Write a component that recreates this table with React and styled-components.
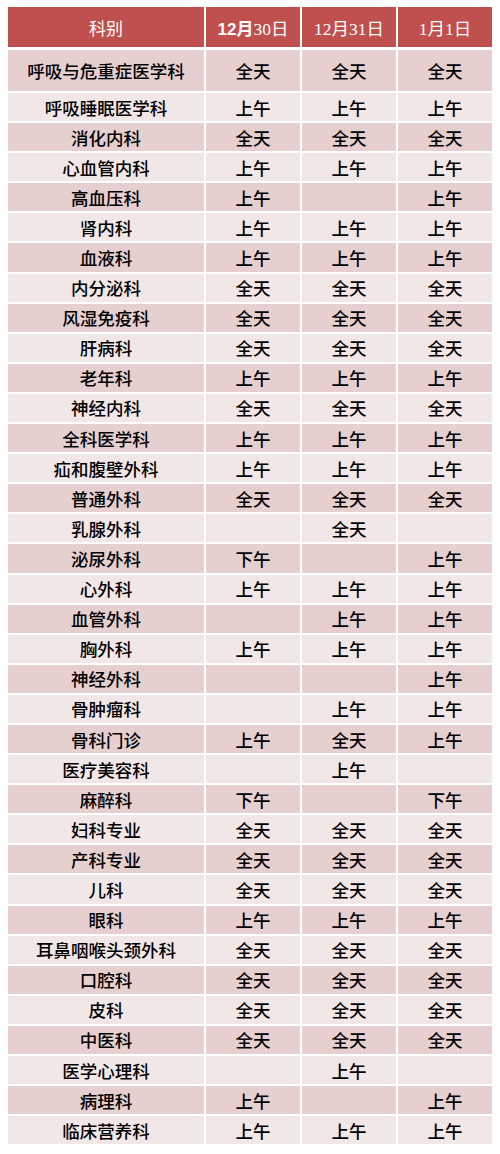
import styled, { createGlobalStyle } from 'styled-components';

const rows = [
  ['呼吸与危重症医学科', '全天', '全天', '全天'],
  ['呼吸睡眠医学科', '上午', '上午', '上午'],
  ['消化内科', '全天', '全天', '全天'],
  ['心血管内科', '上午', '上午', '上午'],
  ['高血压科', '上午', '', '上午'],
  ['肾内科', '上午', '上午', '上午'],
  ['血液科', '上午', '上午', '上午'],
  ['内分泌科', '全天', '全天', '全天'],
  ['风湿免疫科', '全天', '全天', '全天'],
  ['肝病科', '全天', '全天', '全天'],
  ['老年科', '上午', '上午', '上午'],
  ['神经内科', '全天', '全天', '全天'],
  ['全科医学科', '上午', '上午', '上午'],
  ['疝和腹壁外科', '上午', '上午', '上午'],
  ['普通外科', '全天', '全天', '全天'],
  ['乳腺外科', '', '全天', ''],
  ['泌尿外科', '下午', '', '上午'],
  ['心外科', '上午', '上午', '上午'],
  ['血管外科', '', '上午', '上午'],
  ['胸外科', '上午', '上午', '上午'],
  ['神经外科', '', '', '上午'],
  ['骨肿瘤科', '', '上午', '上午'],
  ['骨科门诊', '上午', '全天', '上午'],
  ['医疗美容科', '', '上午', ''],
  ['麻醉科', '下午', '', '下午'],
  ['妇科专业', '全天', '全天', '全天'],
  ['产科专业', '全天', '全天', '全天'],
  ['儿科', '全天', '全天', '全天'],
  ['眼科', '上午', '上午', '上午'],
  ['耳鼻咽喉头颈外科', '全天', '全天', '全天'],
  ['口腔科', '全天', '全天', '全天'],
  ['皮科', '全天', '全天', '全天'],
  ['中医科', '全天', '全天', '全天'],
  ['医学心理科', '', '上午', ''],
  ['病理科', '上午', '', '上午'],
  ['临床营养科', '上午', '上午', '上午'],
];

function App() {
  return (
    <>
      <GlobalStyle />
      <Table>
        <HeadCell>科别</HeadCell>
        <HeadCell>
          <Bold>12月</Bold>
          <Serif>30日</Serif>
        </HeadCell>
        <HeadCell>
          <Serif>12月31日</Serif>
        </HeadCell>
        <HeadCell>
          <Serif>1月1日</Serif>
        </HeadCell>

        {rows.map((row, i) =>
          row.map((text, j) => (
            <Cell key={i + '-' + j} $dark={i % 2 === 0} $first={i === 0}>
              {text}
            </Cell>
          ))
        )}
      </Table>
    </>
  );
}

export default App;

const GlobalStyle = createGlobalStyle`
  body {
    margin: 0;
    background: #fff;
    font-family: "Noto Sans CJK SC", "Noto Sans", sans-serif;
  }
`;

const Table = styled.div`
  display: grid;
  grid-template-columns: 196px 94px 94px 94px;
  column-gap: 2px;
  row-gap: 2px;
  width: 484px;
  margin: 7px 0 0 8px;
`;

const HeadCell = styled.div`
  height: 40px;
  margin-bottom: 1px;
  background: #c0504d;
  color: #fff;
  display: flex;
  align-items: center;
  justify-content: center;
  font-size: 17px;
  font-family: "Liberation Sans", "Noto Sans CJK SC", sans-serif;
`;

const Bold = styled.span`
  font-weight: 700;
`;

const Serif = styled.span`
  font-family: "Liberation Serif", "Noto Sans CJK SC", serif;
  font-size: 17.5px;
`;

const Cell = styled.div`
  height: ${props => (props.$first ? '41px' : '28.1px')};
  background: ${props => (props.$dark ? '#e6cfcf' : '#f2e7e7')};
  color: #000;
  display: flex;
  align-items: center;
  justify-content: center;
  font-size: 17.5px;
  font-weight: 500;
`;
